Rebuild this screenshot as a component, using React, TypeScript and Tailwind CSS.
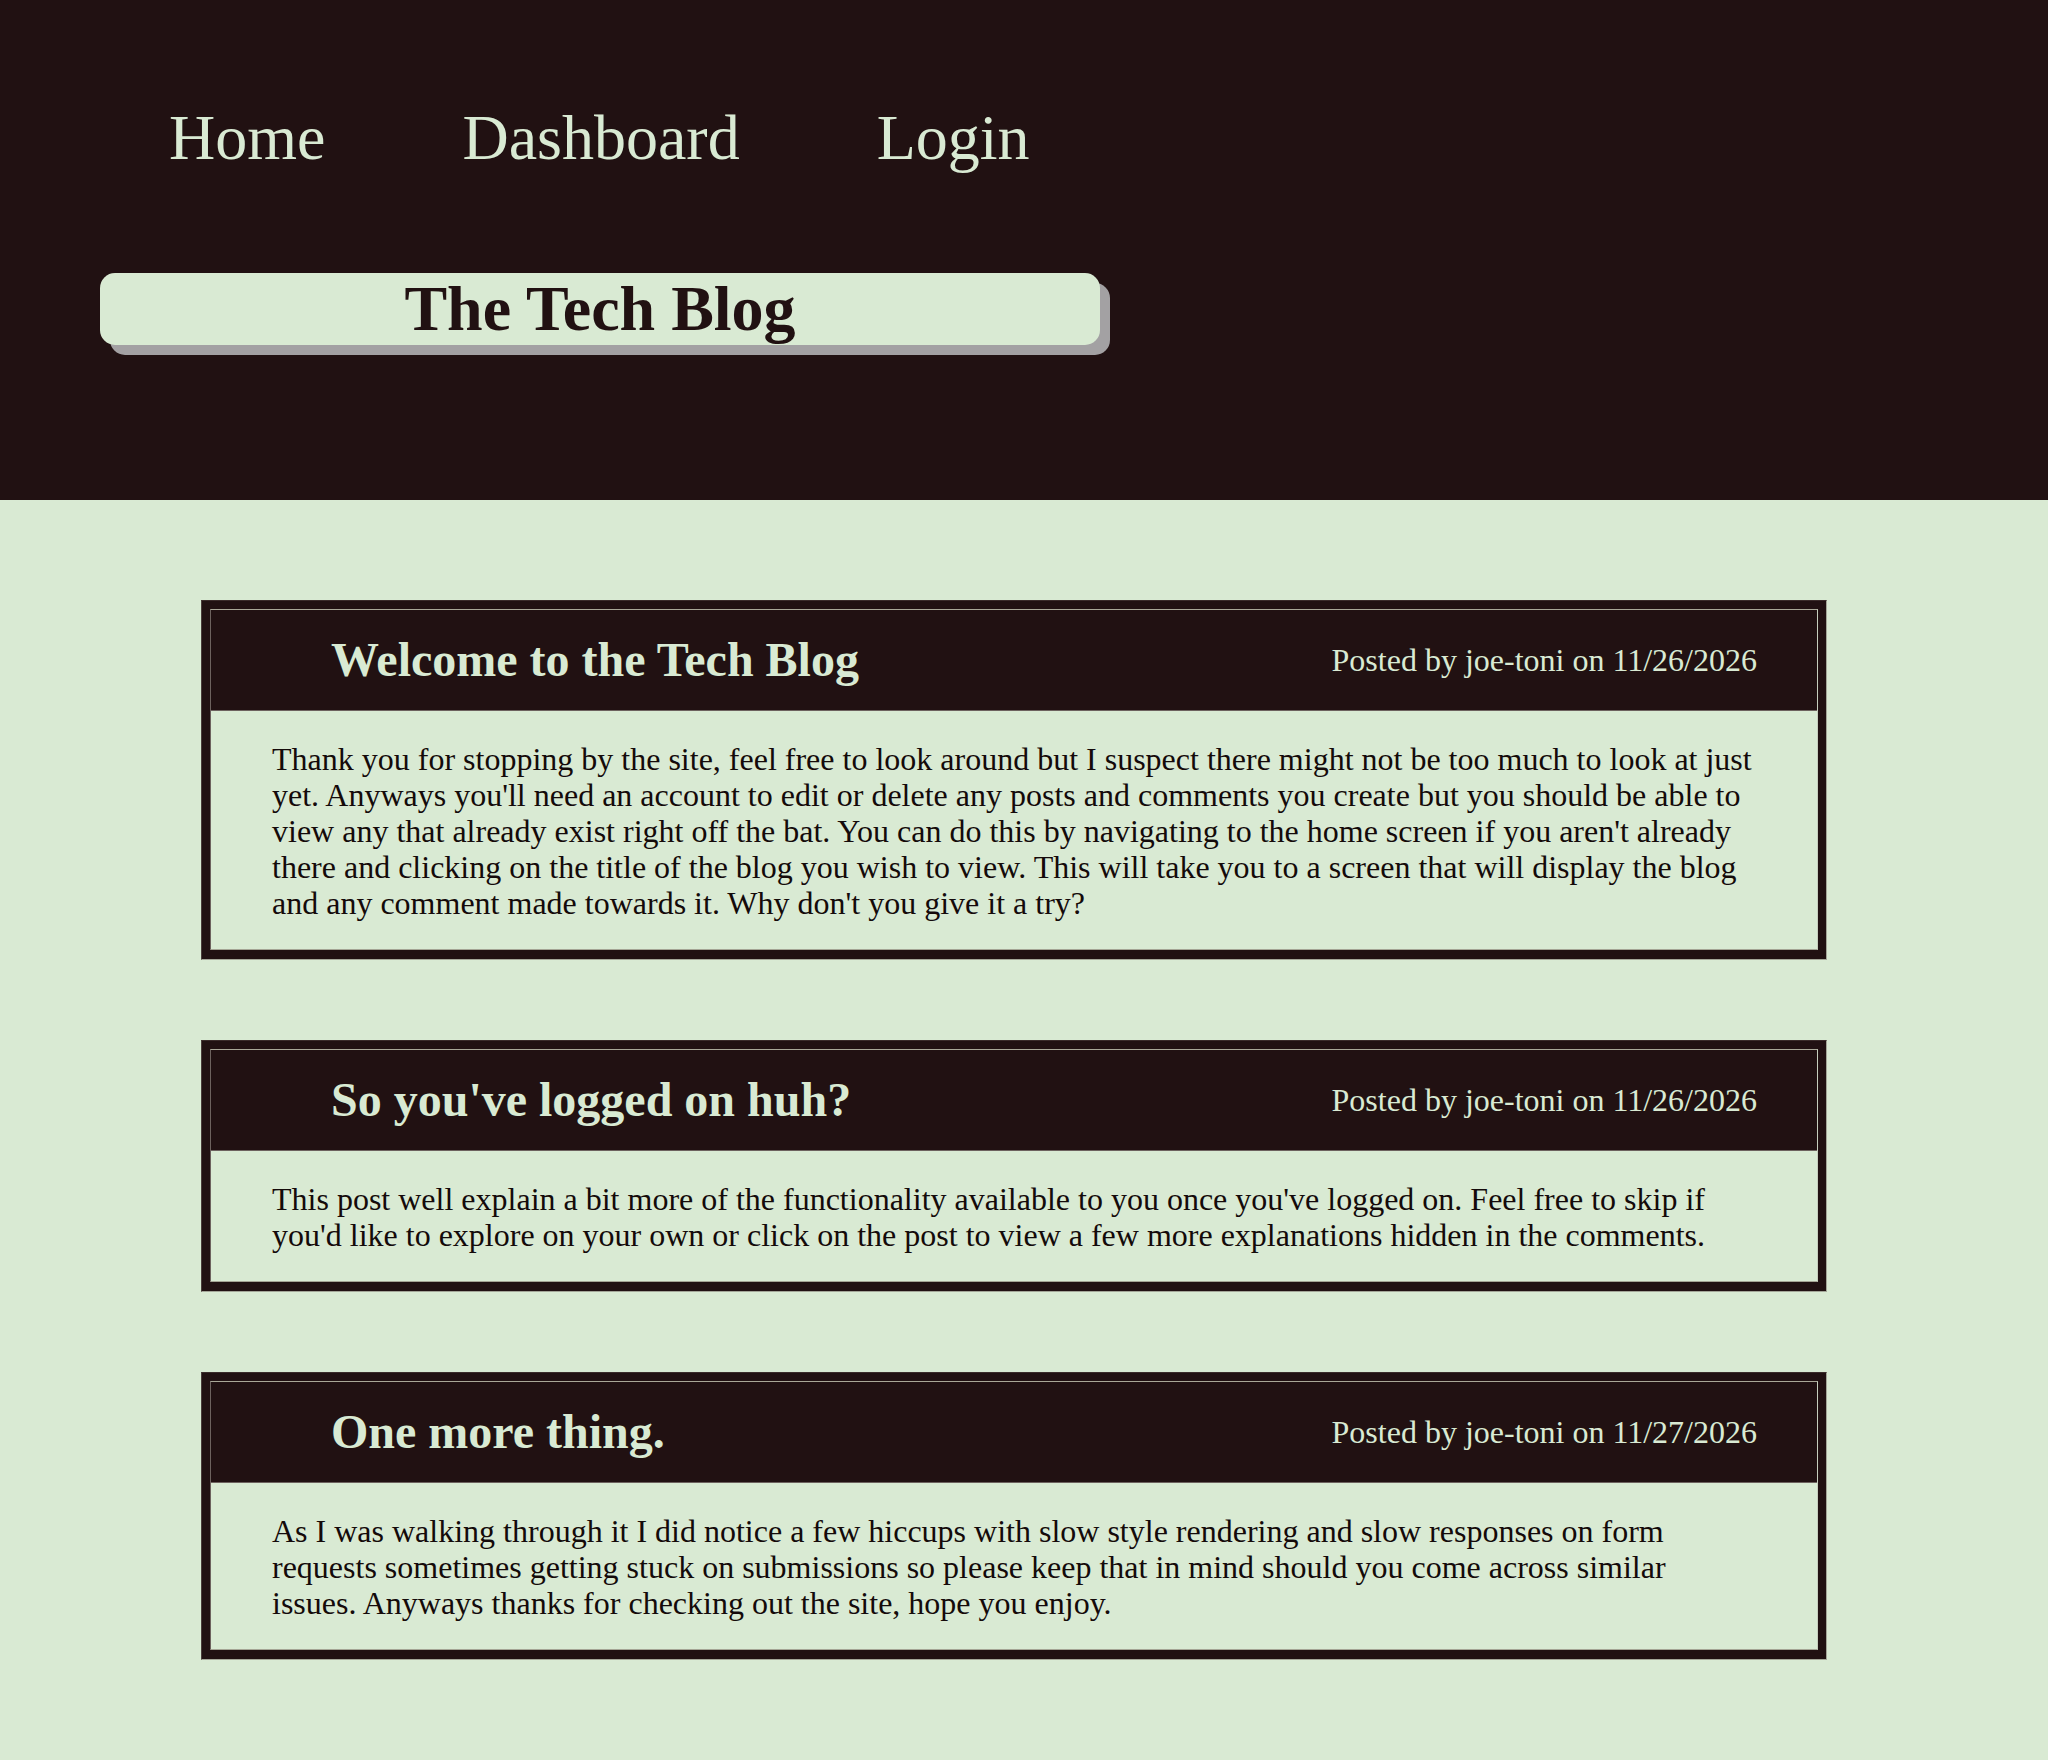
import React from "react";

const posts = [
  {
    title: "Welcome to the Tech Blog",
    meta: "Posted by joe-toni on 11/26/2026",
    body: "Thank you for stopping by the site, feel free to look around but I suspect there might not be too much to look at just yet. Anyways you'll need an account to edit or delete any posts and comments you create but you should be able to view any that already exist right off the bat. You can do this by navigating to the home screen if you aren't already there and clicking on the title of the blog you wish to view. This will take you to a screen that will display the blog and any comment made towards it. Why don't you give it a try?",
  },
  {
    title: "So you've logged on huh?",
    meta: "Posted by joe-toni on 11/26/2026",
    body: "This post well explain a bit more of the functionality available to you once you've logged on. Feel free to skip if you'd like to explore on your own or click on the post to view a few more explanations hidden in the comments.",
  },
  {
    title: "One more thing.",
    meta: "Posted by joe-toni on 11/27/2026",
    body: "As I was walking through it I did notice a few hiccups with slow style rendering and slow responses on form requests sometimes getting stuck on submissions so please keep that in mind should you come across similar issues. Anyways thanks for checking out the site, hope you enjoy.",
  },
];

export default function App() {
  return (
    <div
      className="min-h-[1760px] w-[2048px] bg-[#d9ead3]"
      style={{ fontFamily: '"Liberation Serif", "Times New Roman", serif' }}
    >
      <header className="h-[500px] bg-[#211112] pt-[106px]">
        <nav className="flex gap-[137px] pl-[169px] text-[64px] leading-[64px] text-[#d9ead3]">
          <a href="#">Home</a>
          <a href="#">Dashboard</a>
          <a href="#">Login</a>
        </nav>
        <div className="ml-[100px] mt-[103px] h-[72px] w-[1000px] rounded-[15px] bg-[#d9ead3] text-center text-[64px] font-bold leading-[72px] text-[#211112] shadow-[10px_10px_0_#a3a1a3]">
          The Tech Blog
        </div>
      </header>
      <main className="flex flex-col gap-[80px] pl-[201px] pt-[100px] pb-[100px]">
        {posts.map((p) => (
          <article
            key={p.title}
            className="w-[1626px] border border-t-[#3a2b2a] border-l-[#4a3d3b] border-r-[#a4a698] border-b-[#a4a698] bg-[#211112] px-[8px] pt-[8px] pb-[9px]"
          >
            <div className="border border-t-[#a9a797] border-l-[#6d625e] border-r-[#c6cebd] border-b-[#a4a494]">
              <div className="flex h-[101px] items-center justify-between border-b border-b-[#6d625e] bg-[#211112] pl-[120px] pr-[60px]">
                <h2 className="text-[48px] font-bold leading-[56px] text-[#d9ead3]">{p.title}</h2>
                <span className="text-[32px] leading-[36px] text-[#d9ead3]">{p.meta}</span>
              </div>
              <div className="bg-[#d9ead3] px-[61px] pt-[30px] pb-[28px] text-[32px] leading-[36px] text-[#140a0a]">
                {p.body}
              </div>
            </div>
          </article>
        ))}
      </main>
    </div>
  );
}
